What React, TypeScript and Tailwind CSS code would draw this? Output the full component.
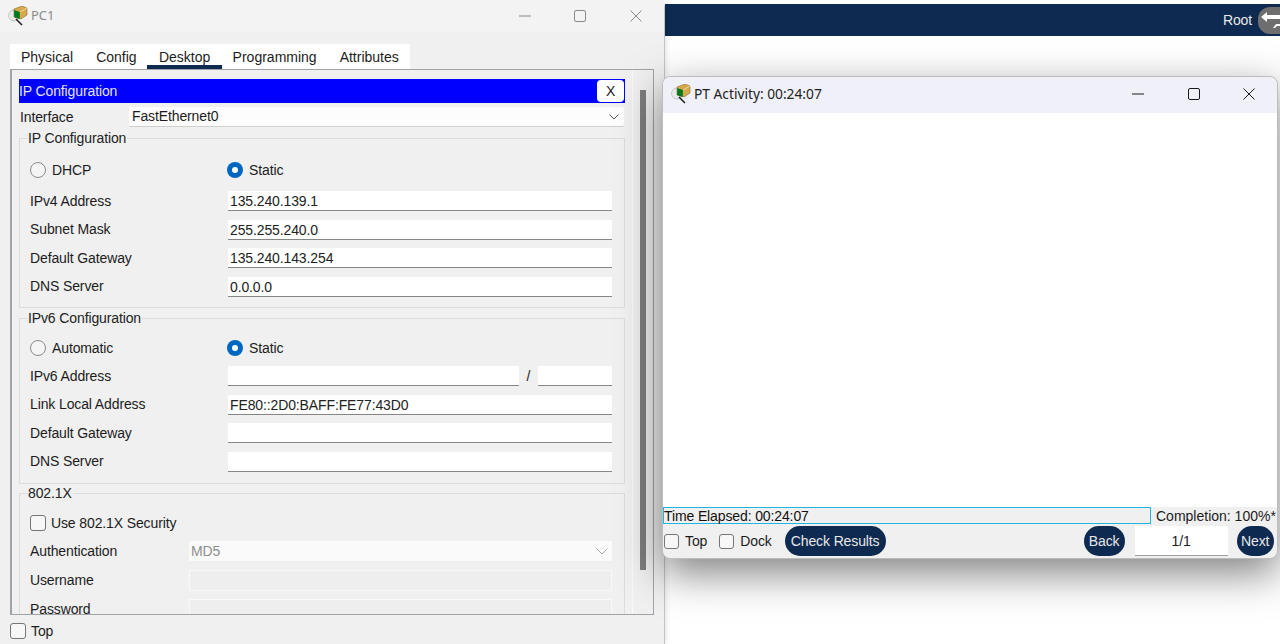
const Logo = () => (
  <svg width="20" height="20" viewBox="0 0 20 20" className="shrink-0">
    <circle cx="6" cy="9.5" r="5.5" fill="#e9e9e9" stroke="#c8c8c8" strokeWidth="1" />
    <path d="M8 13l6 6" stroke="#1a1a1a" strokeWidth="1.5" />
    <path d="M6 3l8-3 5 2v7l-6 4-7-2z" fill="#d8a94a" stroke="#7a5c20" strokeWidth="0.5" />
    <path d="M6 4l6 2v7l-6-2z" fill="#0f8a1e" />
    <path d="M8 5v7M10 5.5v7" stroke="#045522" strokeWidth="0.8" />
    <path d="M12 6l7-4" stroke="#f3dfa8" strokeWidth="0.8" />
  </svg>
);

const WinIcons = ({ color, xs }: { color: string; xs: string }) => (
  <div className={`flex items-center ${xs}`}>
    <svg width="12" height="12" viewBox="0 0 12 12"><path d="M0 6h12" stroke={color} strokeWidth="1" /></svg>
    <svg width="12" height="12" viewBox="0 0 12 12"><rect x="0.5" y="0.5" width="11" height="11" rx="1.5" fill="none" stroke={color} strokeWidth="1" /></svg>
    <svg width="12" height="12" viewBox="0 0 12 12"><path d="M0.5 0.5l11 11M11.5 0.5l-11 11" stroke={color} strokeWidth="1" /></svg>
  </div>
);

const Radio = ({ on }: { on?: boolean }) =>
  on ? (
    <span className="-ml-[1px] flex w-4 h-4 shrink-0 items-center justify-center rounded-full bg-[#0067c0]">
      <span className="block w-[6px] h-[6px] rounded-full bg-white" />
    </span>
  ) : (
    <span className="block w-4 h-4 shrink-0 rounded-full border border-[#8a8a8a] bg-[#f5f5f5]" />
  );

const Check = () => <span className="block w-[15px] h-[15px] shrink-0 rounded-[3px] border border-[#767676] bg-[#f7f7f7]" />;
const CheckLg = () => <span className="block w-4 h-4 shrink-0 rounded-[3px] border border-[#767676] bg-[#f7f7f7]" />;

const Field = ({ children, w = "w-[384px]" }: { children?: string; w?: string }) => (
  <div className={`${w} h-[20px] shrink-0 bg-white border-b border-[#868686] pl-[2px] leading-[20px] text-[#222]`}>{children}</div>
);

const Row = ({ label, value }: { label: string; value?: string }) => (
  <div className="flex h-[20px] items-center">
    <span className="w-[198px] shrink-0">{label}</span>
    <Field>{value}</Field>
  </div>
);

const RadioRow = ({ first, h }: { first: string; h: string }) => (
  <div className={`flex ${h} items-center`}>
    <div className="flex w-[198px] shrink-0 items-center gap-[6px]">
      <Radio />
      <span>{first}</span>
    </div>
    <div className="flex items-center gap-[6px]">
      <Radio on />
      <span>Static</span>
    </div>
  </div>
);

const Group = ({ title, className, children }: { title: string; className: string; children: React.ReactNode }) => (
  <div className={`relative mx-[8px] w-[606px] shrink-0 border border-[#dcdcdc] pl-[10px] ${className}`}>
    <span className="absolute left-[8px] top-[-10px] bg-[#f0f0f0] h-[18px] leading-[18px] pr-[1px] text-[#222]">{title}</span>
    {children}
  </div>
);

const Pill = ({ children, w }: { children: string; w: string }) => (
  <div className={`${w} h-[30px] shrink-0 rounded-[15px] bg-[#0e2a50] text-center leading-[30px] text-[#e8e8e8]`}>{children}</div>
);

export default function App() {
  return (
    <div className="relative w-[1280px] h-[644px] overflow-hidden bg-white text-[14px] tracking-[-0.12px] text-[#1c1c1c] font-['Liberation_Sans',Arial,sans-serif]">
      <div className="ml-[665px] pt-[4px]">
        <div className="flex h-[32px] items-center justify-end bg-[#0e2a50] text-[#e8e8e8]">
          <span className="mr-[6px]">Root</span>
          <div className="flex w-[22px] h-[27px] items-center overflow-hidden rounded-l-[12px] bg-[#6e6e6e]">
            <svg width="22" height="27" viewBox="0 0 22 27">
              <path d="M3 10l6-5v3h13v4H9v3z" fill="#fff" />
              <path d="M22 17h-4l-3 4h2l2-2h3z" fill="#fff" />
            </svg>
          </div>
        </div>
      </div>

      {/* PC1 window */}
      <div className="absolute left-0 top-0 flex w-[665px] h-[644px] flex-col rounded-tr-[8px] border-r border-[#c4c4c4] bg-[#f0f0f0] shadow-[0_0_6px_rgba(0,0,0,0.15)]">
        <div className="flex h-[32px] shrink-0 items-center bg-[#f3f3f3] pl-[8px]">
          <Logo />
          <span className="ml-[3px] font-['Noto_Sans',sans-serif] text-[13px] tracking-normal text-[#8a8a8a]">PC1</span>
          <WinIcons color="#8a8a8a" xs="ml-[464px] gap-[43.5px]" />
        </div>
        <div className="ml-[10px] mt-[12px] flex h-[25px] w-[400px] shrink-0 bg-white tracking-normal">
          <span className="ml-[11px] mt-[3px]">Physical</span>
          <span className="ml-[23px] mt-[3px]">Config</span>
          <div className="relative ml-[10px] h-[25px] w-[75px] border-b-[4px] border-[#0e2a50] pl-[1px] pt-[3px] text-center">Desktop</div>
          <span className="ml-[11px] mt-[3px]">Programming</span>
          <span className="ml-[23px] mt-[3px]">Attributes</span>
        </div>
        <div className="relative ml-[10px] flex h-[546px] w-[644px] shrink-0 flex-col overflow-hidden border border-l-2 border-[#a0a4a8] bg-[#f0f0f0] pt-[9px]">
          <div className="ml-[7px] flex h-[24px] w-[606px] shrink-0 items-center justify-between bg-[#0000ff] pr-[1px] text-[#e4e4ff]">
            <span>IP Configuration</span>
            <span className="h-[22px] w-[27px] rounded-[4px] bg-white text-center leading-[22px] text-[#222]">X</span>
          </div>
          <div className="ml-[8px] mt-[4px] flex h-[20px] shrink-0 items-center">
            <span className="w-[109px] shrink-0">Interface</span>
            <div className="flex h-[20px] w-[495px] items-center justify-between rounded-[2px] border-b border-[#cfcfcf] bg-[#fdfdfd] pl-[3px] pr-[5px]">
              <span>FastEthernet0</span>
              <svg width="10" height="6" viewBox="0 0 10 6"><path d="M0.5 0.5L5 5l4.5-4.5" fill="none" stroke="#555" strokeWidth="1" /></svg>
            </div>
          </div>

          <Group title="IP Configuration" className="ml-[7px] mt-[11px] h-[170px] pt-[21px]">
            <RadioRow first="DHCP" h="h-[20px]" />
            <div className="mt-[11px] flex flex-col gap-[8.5px]">
              <Row label="IPv4 Address" value="135.240.139.1" />
              <Row label="Subnet Mask" value="255.255.240.0" />
              <Row label="Default Gateway" value="135.240.143.254" />
              <Row label="DNS Server" value="0.0.0.0" />
            </div>
          </Group>

          <Group title="IPv6 Configuration" className="ml-[7px] mt-[10px] h-[166px] pt-[20px]">
            <RadioRow first="Automatic" h="h-[18px]" />
            <div className="mt-[9px] flex flex-col gap-[8.5px]">
              <div className="flex h-[20px] items-center">
                <span className="w-[198px] shrink-0">IPv6 Address</span>
                <Field w="w-[291px]" />
                <span className="w-[19px] text-center">/</span>
                <Field w="w-[74px]" />
              </div>
              <Row label="Link Local Address" value="FE80::2D0:BAFF:FE77:43D0" />
              <Row label="Default Gateway" />
              <Row label="DNS Server" />
            </div>
          </Group>

          <Group title="802.1X" className="ml-[7px] mt-[9px] h-[140px] pt-[21px]">
            <div className="flex h-[16px] items-center gap-[5px]">
              <CheckLg />
              <span>Use 802.1X Security</span>
            </div>
            <div className="mt-[10px] flex h-[20px] items-center">
              <span className="w-[159px] shrink-0">Authentication</span>
              <div className="flex h-[20px] w-[423px] items-center justify-between bg-[#fafafa] pl-[2px] pr-[4px] text-[#8f8f8f]">
                <span>MD5</span>
                <svg width="12" height="7" viewBox="0 0 12 7"><path d="M0.5 0.5L6 6l5.5-5.5" fill="none" stroke="#a8a8a8" strokeWidth="1" /></svg>
              </div>
            </div>
            <div className="mt-[9px] flex h-[21px] items-center">
              <span className="w-[159px] shrink-0">Username</span>
              <div className="h-[21px] w-[423px] border border-[#f8f8f8] bg-[#eeeeee]" />
            </div>
            <div className="mt-[8px] flex h-[21px] items-center">
              <span className="w-[159px] shrink-0">Password</span>
              <div className="h-[21px] w-[423px] border border-[#f8f8f8] bg-[#eeeeee]" />
            </div>
          </Group>

          <div className="absolute right-0 top-0 bottom-0 w-[21px] border-l border-[#f8f8f8] bg-[#f0f0f0]">
            <div className="ml-[7px] mt-[20px] h-[480px] w-[6px] bg-[#7e7e7e]" />
          </div>
        </div>
        <div className="ml-[10px] mt-[8px] flex h-[16px] items-center gap-[5px]">
          <CheckLg />
          <span>Top</span>
        </div>
      </div>

      {/* PT Activity window */}
      <div className="absolute left-[662px] top-[76px] flex w-[616px] h-[483px] flex-col rounded-[8px] border border-[#bdbdbd] bg-[#f0f0f0] shadow-[0_14px_42px_rgba(0,0,0,0.5)]">
        <div className="flex h-[36px] shrink-0 items-center rounded-t-[8px] bg-[#f0f1f8] pb-[2px] pl-[8px]">
          <Logo />
          <span className="ml-[3px] w-[129px] whitespace-nowrap font-['Noto_Sans',sans-serif] text-[13.75px] tracking-normal text-[#222]">PT Activity: 00:24:07</span>
          <WinIcons color="#1a1a1a" xs="ml-[309px] gap-[43.5px]" />
        </div>
        <div className="h-[394px] shrink-0 bg-white" />
        <div className="flex h-[16px] shrink-0 items-center">
          <div className="h-[17px] w-[488px] border border-[#1fb5e0] bg-[#f0f0f0] leading-[16px] text-[#111]">Time Elapsed: 00:24:07</div>
          <span className="ml-[5px] mt-[2px] whitespace-nowrap tracking-normal">Completion: 100%*</span>
        </div>
        <div className="mt-[3px] flex items-center pl-[1px]">
          <Check />
          <span className="ml-[6px]">Top</span>
          <span className="ml-[12px]"><Check /></span>
          <span className="ml-[6px]">Dock</span>
          <span className="ml-[13px]"><Pill w="w-[101px]">Check Results</Pill></span>
          <span className="ml-[198px]"><Pill w="w-[41px]">Back</Pill></span>
          <div className="ml-[10px] h-[30px] w-[93px] border-b border-[#a0a0a0] bg-white text-center leading-[30px] text-[#222]">1/1</div>
          <span className="ml-[9px]"><Pill w="w-[37px]">Next</Pill></span>
        </div>
      </div>
    </div>
  );
}
